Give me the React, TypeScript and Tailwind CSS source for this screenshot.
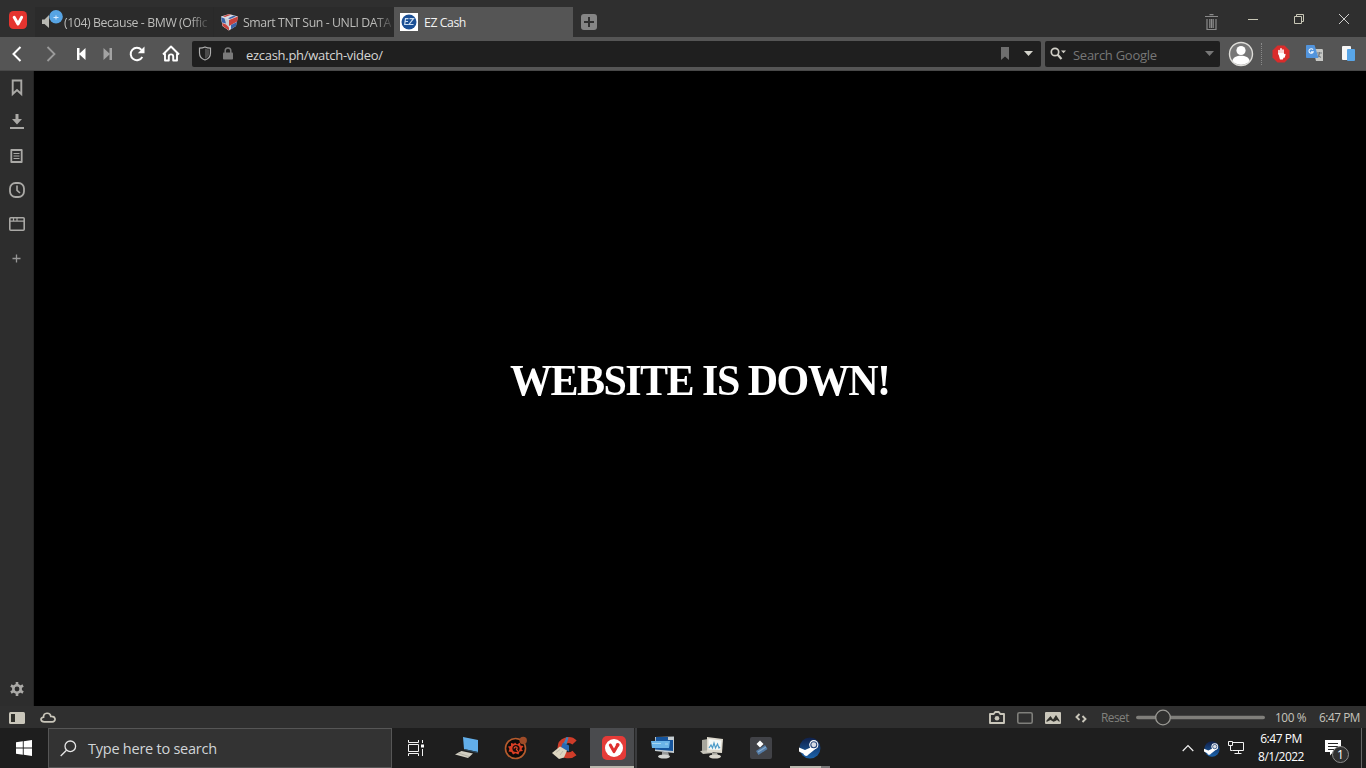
import type { ReactNode } from "react";
import clsx from "clsx";

type SvgProps = { w: number; h: number; className?: string; children: ReactNode };

function Svg({ w, h, className, children }: SvgProps) {
    return (
        <svg width={w} height={h} viewBox={`0 0 ${w} ${h}`} fill="none" className={clsx("shrink-0", className)}>
            {children}
        </svg>
    );
}

function VivaldiBadge() {
    return (
        <Svg w={18} h={18}>
            <rect width="18" height="18" rx="4.5" fill="#e5342f" />
            <path d="M5.2 6.2L9 13L12.6 6.4" stroke="#fff" strokeWidth="3" strokeLinecap="round" strokeLinejoin="round" />
        </Svg>
    );
}

function SpeakerIcon() {
    return (
        <Svg w={22} h={24}>
            <path d="M0 9.500h2.500L7 5v13l-4.500-4H0z" fill="#b9b9b3" />
            <circle cx="14" cy="6.800" r="6.800" fill="#57a4e4" />
            <path d="M11.500 7.500h5M14 5.500v4" stroke="#d4eaff" strokeWidth="1.100" />
        </Svg>
    );
}

function CubeIcon() {
    return (
        <Svg w={17} h={17}>
            <path d="M0 2.500L8 0l9 2.500-2 9.500-7 4.500L1.500 12z" fill="#d8dbe2" />
            <path d="M0 3l8 3v10.500L1.500 12z" fill="#c7cbd4" />
            <path d="M0 3.200l3.500 1.300L5 9.500l-3.800-1z" fill="#3a62a8" />
            <path d="M1.200 9l3.800 1.500 3 3v3L1.700 12z" fill="#c9413c" />
            <path d="M8 6l9-3.500-.8 5L10 11l-2 1z" fill="#c9413c" />
            <path d="M10 11l6-3-1 4-5 3.200z" fill="#3a62a8" />
            <path d="M2 2.200L8 .200l2 .600-6 2.200z" fill="#c9413c" />
            <path d="M7 4.300l5.500-2.500 2.500.700L9 5z" fill="#3a62a8" />
        </Svg>
    );
}

function EzIcon() {
    return (
        <Svg w={18} h={18}>
            <rect width="18" height="18" fill="#fff" />
            <circle cx="9" cy="9" r="7.500" fill="#1b4f95" />
            <path d="M8.500 5.700H5.500L4.700 11.500h3.500M5 8.500h3M9.500 5.700h4L9 11.500h4.500" stroke="#c9dcf0" strokeWidth="1.200" />
        </Svg>
    );
}

function SteamIcon({ size }: { size: number }) {
    return (
        <svg width={size} height={size} viewBox="0 0 22 22" className="shrink-0">
            <defs>
                <linearGradient id="steam" x1="0" y1="0" x2="0" y2="1">
                    <stop offset="0" stopColor="#10204a" />
                    <stop offset="1" stopColor="#1b63ab" />
                </linearGradient>
            </defs>
            <circle cx="11" cy="11" r="10.500" fill="url(#steam)" />
            <path d="M0 10.500l6 2.600 5-2.300 3-5 5 4-6 5-3.500 2.800c-1 2-4.500 1.600-5-.8L0 14.500z" fill="#fff" />
            <circle cx="14.800" cy="7.700" r="4.600" fill="#fff" />
            <circle cx="14.800" cy="7.700" r="3" fill="#d8dde5" stroke="#27467a" strokeWidth="1.100" />
        </svg>
    );
}

const tabs = [
    { title: "(104) Because - BMW (Offic", icon: <SpeakerIcon />, box: "w-[178px] pl-[7px]", label: "text-[#bdbdbb] tracking-[-0.41px]" },
    { title: "Smart TNT Sun - UNLI DATA", icon: <CubeIcon />, box: "w-[181px] pl-[7px] border-l border-[#292929]", label: "text-[#bdbdbb] ml-[5px] tracking-[-0.42px]" },
    { title: "EZ Cash", icon: <EzIcon />, box: "w-[179px] pl-1.5 bg-[#555]", label: "text-[#f2f2f2] ml-[6px] tracking-[-0.45px]" },
];

function TabBar() {
    return (
        <div className="flex h-[37px] bg-[#2f2f2f]">
            <div className="flex w-[35px] justify-center pt-[11px]">
                <VivaldiBadge />
            </div>
            <div className="flex pt-[7px]">
                {tabs.map((tab, i) => (
                    <div key={tab.title} className={clsx("flex h-[30px] items-center", tab.box, i < 2 && "bg-[#2b2b2b]")}>
                        {tab.icon}
                        <span
                            className={clsx(
                                "whitespace-nowrap text-[12.3px] leading-[18px] pt-px",
                                tab.label,
                                i < 2 && "[mask-image:linear-gradient(to_right,black_88%,#0003)]",
                            )}
                        >
                            {tab.title}
                        </span>
                    </div>
                ))}
            </div>
            <div className="ml-2 pt-[14px]">
                <Svg w={16} h={16}>
                    <rect width="16" height="16" rx="3" fill="#858585" />
                    <path d="M8 3v10M3 8h10" stroke="#303030" strokeWidth="2" />
                </Svg>
            </div>
            <div className="ml-auto flex">
                <Svg w={13} h={17} className="mt-[14px] mr-[29px]">
                    <path d="M0 2.500h13M4.500 .700h4M2 5v10.500h9V5M4.800 5v9M6.500 5v9M8.200 5v9" stroke="#8b8b8b" strokeWidth="1.200" />
                </Svg>
                <Svg w={12} h={12} className="mt-[13px] mr-[34px]">
                    <path d="M1 6.500h10" stroke="#c8c7b6" />
                </Svg>
                <Svg w={12} h={12} className="mt-[13px] mr-[33px]">
                    <path d="M1.500 3.500h7v7h-7zM3.500 3V1.500h7v7H9" stroke="#c8c7b6" />
                </Svg>
                <Svg w={12} h={12} className="mt-[13px] mr-4">
                    <path d="M1 1l10 10M11 1L1 11" stroke="#d0d0ce" />
                </Svg>
            </div>
        </div>
    );
}

function Slot({ className, children }: { className?: string; children: ReactNode }) {
    return <div className={clsx("flex shrink-0 items-center justify-center", className)}>{children}</div>;
}

function AddressBar() {
    return (
        <div className="flex h-[34px] items-center border-b border-[#484848] bg-[#555]">
            <Slot className="w-[34px]">
                <Svg w={10} h={16}>
                    <path d="M8.500 1L1.500 8l7 7" stroke="#fff" strokeWidth="2" />
                </Svg>
            </Slot>
            <Slot className="w-[34px]">
                <Svg w={10} h={16}>
                    <path d="M1.500 1l7 7-7 7" stroke="#9b9b9b" strokeWidth="1.800" />
                </Svg>
            </Slot>
            <Slot className="w-[26px]">
                <Svg w={9} h={12}>
                    <path d="M0 0h2.500v12H0zM8.500 0v12L2 6z" fill="#fff" />
                </Svg>
            </Slot>
            <Slot className="w-[26px]">
                <Svg w={9} h={12}>
                    <path d="M6.500 0H9v12H6.500zM.500 0v12L7 6z" fill="#a3a3a3" />
                </Svg>
            </Slot>
            <Slot className="w-[34px]">
                <Svg w={16} h={16}>
                    <path d="M13.300 11A6.200 6.200 0 1 1 12.500 3.800" stroke="#fff" strokeWidth="2" />
                    <path d="M15.500 .500v6.700H8.800z" fill="#fff" />
                </Svg>
            </Slot>
            <Slot className="w-[34px]">
                <Svg w={18} h={17}>
                    <path d="M1 9.500L9 1.500l8 8M3 8.500V15.500h3.800v-4c0-2.800 4.400-2.800 4.400 0v4H15V8.500" stroke="#fff" strokeWidth="1.900" strokeLinejoin="round" />
                </Svg>
            </Slot>
            <div className="ml-1 flex h-[26px] w-[849px] items-center rounded-[2px] bg-[#1f1f1f] pl-[6px]">
                <Svg w={14} h={15}>
                    <path d="M7 1c2 1 4 1.200 5.500 1.200V7c0 3.500-2.500 6-5.500 7-3-1-5.500-3.500-5.500-7V2.200C3 2.200 5 2 7 1z" stroke="#adadad" strokeWidth="1.200" />
                    <path d="M7 2.500c1.500.8 3 1 4.300 1V7c0 2.700-2 4.800-4.300 5.800z" fill="#4b4b4b" />
                </Svg>
                <Svg w={10} h={13} className="ml-[11px]">
                    <path d="M2.200 6V3.800c0-3.700 5.600-3.700 5.600 0V6" stroke="#7b7b7b" strokeWidth="1.500" />
                    <rect y="5.500" width="10" height="7" rx=".8" fill="#7b7b7b" />
                </Svg>
                <span className="ml-[13px] pt-[2px] text-[13px] leading-5 tracking-[-0.29px] text-[#d6d6d4]">ezcash.ph/watch-video/</span>
                <div className="ml-auto flex items-center gap-[15px] pr-2">
                    <Svg w={8} h={13}>
                        <path d="M0 0h8v13L4 9.500 0 13z" fill="#6e6e6e" />
                    </Svg>
                    <Svg w={9} h={5}>
                        <path d="M0 0h9L4.500 5z" fill="#d4d3cb" />
                    </Svg>
                </div>
            </div>
            <div className="ml-1 flex h-[26px] w-[175px] items-center rounded-[2px] bg-[#1f1f1f] pl-[5px]">
                <Svg w={16} h={13}>
                    <circle cx="5" cy="5" r="3.700" stroke="#d1cfc7" strokeWidth="1.700" />
                    <path d="M7.500 7.500l4 4.500" stroke="#d1cfc7" strokeWidth="2.200" />
                    <path d="M11 3.500h5L13.500 6.200z" fill="#d1cfc7" />
                </Svg>
                <span className="ml-[7px] pt-[2px] text-[13px] leading-5 tracking-[-0.27px] text-[#777]">Search Google</span>
                <Svg w={9} h={5} className="mr-[6px] ml-auto">
                    <path d="M0 0h9L4.500 5z" fill="#777" />
                </Svg>
            </div>
            <Svg w={26} h={26} className="ml-2">
                <circle cx="13" cy="13" r="11.500" fill="#777" stroke="#deddd9" strokeWidth="1.400" />
                <circle cx="13" cy="9.500" r="4.600" fill="#fff" />
                <path d="M4.500 20c0-7 17-7 17 0-4 5-13 5-17 0z" fill="#fff" />
            </Svg>
            <div className="ml-[7px] h-[22px] border-l border-dotted border-[#8a8a8a]" />
            <Svg w={18} h={18} className="ml-[10px]">
                <path d="M5.500 .500h7l5 5v7l-5 5h-7l-5-5v-7z" fill="#d92c2b" />
                <path d="M7 9V5.500M9 9V3.800M11 9V5M12.800 9.500l-.800 2.500" stroke="#fff" strokeWidth="1.600" strokeLinecap="round" />
                <path d="M6.200 8h5.600l.5 3-1.500 3.500H8z" fill="#fff" />
            </Svg>
            <Svg w={18} h={17} className="ml-[16px]">
                <path d="M7 4h8.500c1 0 1.500.5 1.500 1.500V16H10z" fill="#c7c8c5" />
                <path d="M11 8h5M13.500 7v1.500c0 2-1 3-2.500 4M12 9.500c.8 1.500 1.500 2.300 3 3" stroke="#747a80" strokeWidth="1.100" />
                <path d="M1 0h7.500l4 13H1c-.6 0-1-.5-1-1V1c0-.6.5-1 1-1z" fill="#5294dc" />
                <path d="M7 4.700a2.200 2.200 0 1 0 .2 2.200H5" stroke="#eef6ff" strokeWidth="1.100" />
            </Svg>
            <Svg w={13} h={16} className="ml-[18px]">
                <rect width="9" height="14" rx="1" fill="#f7f7f7" />
                <rect x="5" y="3" width="8" height="12" rx="1" fill="#59a6e8" />
            </Svg>
        </div>
    );
}

function SidePanel() {
    const line = "#aaa9a6";
    return (
        <div className="flex w-[34px] flex-col border-r border-[#242424] bg-[#2d2d2d]">
            <Slot className="h-[34px]">
                <Svg w={12} h={18}>
                    <path d="M1.700 1.500h8.600v13.500L6 11l-4.300 4z" stroke={line} strokeWidth="1.900" />
                </Svg>
            </Slot>
            <Slot className="h-[34px]">
                <Svg w={14} h={18}>
                    <path d="M5.500 1h3v5H12l-5 5.500-5-5.500h3.500zM0 14h14v2H0z" fill={line} />
                </Svg>
            </Slot>
            <Slot className="h-[34px]">
                <Svg w={13} h={16}>
                    <path d="M1.300 2h10.400v12H1.300z" stroke={line} strokeWidth="1.800" strokeLinejoin="round" />
                    <path d="M1 2.200h11M3.500 5.500h6M3.500 8h6M3.500 10.500h6" stroke={line} strokeWidth="1.200" />
                </Svg>
            </Slot>
            <Slot className="h-[34px]">
                <Svg w={16} h={16}>
                    <rect x="1" y="1" width="14" height="14" rx="5.500" stroke={line} strokeWidth="1.800" />
                    <path d="M8 3.500v4.800l3 2.700" stroke={line} strokeWidth="1.600" />
                </Svg>
            </Slot>
            <Slot className="h-[34px]">
                <Svg w={16} h={14}>
                    <rect x=".8" y=".8" width="14.400" height="12.400" rx="1" stroke={line} strokeWidth="1.600" />
                    <path d="M1 4.200h14M4.500 1v3M8 1v3" stroke={line} strokeWidth="1.200" />
                </Svg>
            </Slot>
            <Slot className="h-[34px]">
                <Svg w={9} h={9}>
                    <path d="M4.500 .500v8M.500 4.500h8" stroke="#969696" strokeWidth="1.300" />
                </Svg>
            </Slot>
            <Slot className="mt-auto h-[34px]">
                <Svg w={14} h={14}>
                    <circle cx="7" cy="7" r="3.700" stroke={line} strokeWidth="2.600" />
                    <path d="M7 0v3M7 11v3M.900 3.500l2.600 1.500M10.500 9l2.600 1.500M.900 10.500L3.500 9M10.500 5l2.600-1.500" stroke={line} strokeWidth="2.600" />
                </Svg>
            </Slot>
        </div>
    );
}

function StatusBar() {
    return (
        <div className="flex h-[22px] items-center bg-[#2f2f2f] pt-px text-[11.8px] text-[#c6c4bc]">
            <Slot className="w-[34px]">
                <Svg w={16} h={12}>
                    <rect width="16" height="12" rx="1.500" fill="#c9c6ba" />
                    <path d="M2 2h4v8H2z" fill="#2f2f2a" />
                </Svg>
            </Slot>
            <Slot className="w-[28px]">
                <Svg w={16} h={11}>
                    <path d="M4.300 9.800C.300 9.800-.1 5.600 3.500 5.200 3.500.2 10 0 10.800 4.300c5.400-.3 5.400 5.500 1.400 5.500z" stroke="#c9c6ba" strokeWidth="1.700" />
                </Svg>
            </Slot>
            <div className="ml-auto flex items-center">
                <Slot className="w-7">
                    <Svg w={16} h={13}>
                        <path d="M1 3h3.700l1.500-2h3.600l1.500 2H15v9H1z" stroke="#c9c6ba" strokeWidth="1.900" strokeLinejoin="round" />
                        <circle cx="8" cy="7.300" r="2.300" fill="#c9c6ba" />
                    </Svg>
                </Slot>
                <Slot className="w-7">
                    <Svg w={16} h={12}>
                        <rect x=".8" y=".8" width="14.400" height="10.400" rx="1.500" stroke="#7f7f7b" strokeWidth="1.600" />
                    </Svg>
                </Slot>
                <Slot className="w-7">
                    <Svg w={16} h={12}>
                        <rect width="16" height="12" rx="1" fill="#c9c6ba" />
                        <path d="M1.500 10V8.500L5.500 4l2.500 3.500L11 3l3.500 5.500V10l-2.500-2-1.500 1-2 .8L5.500 8z" fill="#30302b" />
                    </Svg>
                </Slot>
                <Slot className="w-7">
                    <Svg w={12} h={10}>
                        <path d="M4.500 1L1.500 4l3 3M7.500 3l3 3-3 3" stroke="#c9c6ba" strokeWidth="1.900" />
                    </Svg>
                </Slot>
                <span className="ml-[6px] w-[35px] whitespace-nowrap tracking-[-0.5px] text-[#81817d]">Reset</span>
                <Svg w={129} h={17}>
                    <rect y="6.700" width="129" height="3.600" rx="1.800" fill="#807f7b" />
                    <circle cx="27" cy="8.500" r="7.300" fill="#30302f" stroke="#9a9994" strokeWidth="1.300" />
                </Svg>
                <span className="ml-[10px] w-11 whitespace-nowrap tracking-[-0.4px]">100 %</span>
                <span className="w-[47px] whitespace-nowrap tracking-[-0.45px]">6:47 PM</span>
            </div>
        </div>
    );
}

const taskIcons = [
    {
        name: "explorer",
        icon: (
            <Svg w={24} h={22}>
                <path d="M8 0l15 3v12L9 12z" fill="#62aee9" />
                <path d="M9 12l14 3v1.300L9 13z" fill="#2f4b60" />
                <path d="M0 17.500l6.500-3.500L18 16.500l-5 4.500z" fill="#d3d0c3" />
                <path d="M3 16l11 3.500" stroke="#a9a79d" strokeWidth=".8" />
            </Svg>
        ),
    },
    {
        name: "gear",
        icon: (
            <Svg w={24} h={24}>
                <circle cx="11.500" cy="12.500" r="10" fill="#0d0b0a" stroke="#b65b2d" strokeWidth="1.600" />
                <path d="M11 6.500l2 2 3-2 .5 3 3 .5-2 3 1.500 2-3.500.5-1 3-3-1.300-2.500 1.300-1.500-2.500-3-.5 1-2.500-1.500-2.500 3-.5v-3l3 .8z" fill="#db3e24" />
                <circle cx="12" cy="12.500" r="3.600" fill="#1b0d0a" />
                <path d="M10 12.500c1-3 4.500-1.500 2.500 1l1.500 2" stroke="#e94c2d" strokeWidth="1.200" />
                <circle cx="19.200" cy="4.500" r="3.700" fill="#9e4b28" />
            </Svg>
        ),
    },
    {
        name: "cleaner",
        icon: (
            <Svg w={26} h={24}>
                <path d="M22.500 6.500C18 2 8.500 4 8.500 12S18 21 22.500 17" stroke="#cf3c29" strokeWidth="6" />
                <path d="M14.500 1l2 .6-2 7-3-1z" fill="#3c83be" />
                <path d="M11 6.500l6 3v6l-8-4z" fill="#2769b5" />
                <path d="M8 10.500l7 4-3 7-5 1.500L0 17z" fill="#ddd5c0" />
                <path d="M4 16.500l4-3M8 19l3-4" stroke="#b5b1a3" strokeWidth=".8" />
            </Svg>
        ),
    },
    {
        name: "vivaldi",
        icon: (
            <Svg w={24} h={24}>
                <rect width="24" height="24" rx="5" fill="#e43b38" />
                <circle cx="12" cy="12" r="9" fill="#fff" />
                <path d="M8.300 9l3.700 6.600L15.700 9" stroke="#df302f" strokeWidth="3" strokeLinecap="round" strokeLinejoin="round" />
                <circle cx="15.700" cy="8.800" r="1.900" fill="#df302f" />
            </Svg>
        ),
    },
    {
        name: "remote",
        icon: (
            <Svg w={24} h={24}>
                <path d="M4 1l19-.500V17L4 15z" fill="#c4cdd2" />
                <path d="M5 1h12v3h5v11L4 13.500z" fill="#16559d" />
                <path d="M0 5h19l-1 7H1z" fill="#6bb4e8" />
                <path d="M1 7.500h9M14 8h3" stroke="#a5d5ef" strokeWidth="1" />
                <path d="M11 16h6l1 3h-7z" fill="#97999a" />
                <ellipse cx="13" cy="20.500" rx="6" ry="2" fill="#d2d4d1" />
            </Svg>
        ),
    },
    {
        name: "monitor",
        icon: (
            <Svg w={24} h={24}>
                <path d="M2 4l12-2v13L2 15z" fill="#a7a69d" />
                <path d="M0 15l10-1 3 3-10 1z" fill="#c6c4b9" />
                <path d="M7 1l16 2-1 14-15-1z" fill="#ddd9cd" />
                <path d="M8.500 3l13 1.500-1 9.500-12-.500z" fill="#f5f8f6" />
                <path d="M9 12l2-3 1.500 3L14 7l1.500 5 2-4 1.500 4 1-1" stroke="#4c9bc9" strokeWidth="1.200" />
                <path d="M12 17h5l1 2h-6z" fill="#a8a79f" />
                <ellipse cx="15" cy="20.500" rx="6" ry="2" fill="#d9d6cc" />
            </Svg>
        ),
    },
    {
        name: "sketch",
        icon: (
            <Svg w={22} h={22}>
                <rect width="22" height="22" rx="2" fill="#414247" />
                <path d="M10 3.500l3.500 3.500L10 10.500 6.500 7z" fill="#fff" />
                <path d="M6 14l9-6 2.500 4-9 6z" fill="#547ca7" />
                <path d="M8 15l8-5" stroke="#86a9cb" strokeWidth="1.200" />
            </Svg>
        ),
    },
    { name: "steam", icon: <SteamIcon size={22} /> },
];

function Taskbar() {
    return (
        <div className="flex h-10 bg-[#1e1e1e] text-white">
            <Slot className="w-12">
                <Svg w={16} h={16}>
                    <path d="M0 2.300l6.800-1v6.300H0zM7.700 1.200L16 0v7.600H7.700zM0 8.500h6.800v6.300L0 13.800zM7.700 8.500H16V16l-8.300-1.200z" fill="#fff" />
                </Svg>
            </Slot>
            <div className="flex w-[344px] items-center border border-[#565656] bg-[#333] pl-[11px]">
                <Svg w={17} h={17}>
                    <circle cx="10.300" cy="6.300" r="5.300" stroke="#e6e6e6" strokeWidth="1.300" />
                    <path d="M6.500 10.200L.7 16" stroke="#e6e6e6" strokeWidth="1.300" />
                </Svg>
                <span className="ml-[11px] pt-[2px] text-[14.5px] tracking-[-0.24px] text-[#d1d5d8]">Type here to search</span>
            </div>
            <Slot className="w-[50px] pr-[3px]">
                <Svg w={17} h={16}>
                    <path d="M1.500 0v2.500h10V0M1.500 16v-2.500h10V16M1.500 4.500h10v7h-10zM15.500 0v3M15.500 9v7" stroke="#f1f1f1" />
                    <path d="M14 4.500h3v3h-3z" fill="#fff" />
                </Svg>
            </Slot>
            {taskIcons.map(({ name, icon }) => (
                <Slot
                    key={name}
                    className={clsx(
                        "relative w-[49px]",
                        name === "vivaldi" && "border-x border-[#1e1e1e] bg-[#4a4b4e]",
                    )}
                >
                    {icon}
                    {name === "vivaldi" && (
                        <>
                            <div className="absolute inset-y-0 right-0 w-[3px] border-l border-[#252525] bg-[#3b3c3e]" />
                            <div className="absolute bottom-0 left-0 h-[2px] w-11 bg-[#b9b8ae]" />
                        </>
                    )}
                    {name === "steam" && (
                        <div className="absolute bottom-0 left-[5px] flex h-[2px] w-10 bg-[#b9b8ae]">
                            <div className="ml-auto w-[9px] bg-[#777]" />
                        </div>
                    )}
                </Slot>
            ))}
            <div className="ml-auto flex items-center">
                <Svg w={12} h={8}>
                    <path d="M.700 7L6 1.500 11.300 7" stroke="#f1f1f1" strokeWidth="1.200" />
                </Svg>
                <div className="ml-[10px] pt-px">
                    <SteamIcon size={16} />
                </div>
                <Svg w={17} h={14} className="ml-[8px]">
                    <path d="M4.500 1.500h11v8h-11M.500 .500h4v4h-4zM2.500 4.500v5h2M10.500 9.500v3M6.500 12.500h7" stroke="#f1f1f1" />
                </Svg>
                <div className="ml-[9px] flex w-[54px] flex-col items-center pb-px text-[12px] leading-[18px] whitespace-nowrap">
                    <span className="tracking-[-0.45px]">6:47 PM</span>
                    <span className="tracking-[-0.5px]">8/1/2022</span>
                </div>
                <div className="relative ml-[17px] h-10 w-[36px]">
                    <Svg w={16} h={16} className="mt-[12px]">
                        <path d="M0 0h16v12H8l-3 3.500V12H0z" fill="#fff" />
                        <path d="M3 3.500h10M3 6.500h10M3 9.500h6" stroke="#252525" />
                    </Svg>
                    <div className="absolute top-[18px] left-[7px] flex size-[17px] items-center justify-center rounded-full border border-[#8c8c8c] bg-[#303030] text-[12px] leading-none">
                        1
                    </div>
                </div>
                <div className="mr-1 h-10 w-px bg-[#666]" />
            </div>
        </div>
    );
}

export default function App() {
    return (
        <div className="flex h-[768px] w-[1366px] flex-col overflow-hidden bg-black font-['Open_Sans','Noto_Sans',sans-serif]">
            <TabBar />
            <AddressBar />
            <div className="flex flex-1">
                <SidePanel />
                <main className="flex flex-1 items-center justify-center bg-black pb-[15px]">
                    <h1 className="scale-x-[0.955] font-['Liberation_Serif',serif] text-[44px] leading-none font-bold tracking-[-1.6px] whitespace-nowrap text-white">
                        WEBSITE IS DOWN!
                    </h1>
                </main>
            </div>
            <StatusBar />
            <Taskbar />
        </div>
    );
}
